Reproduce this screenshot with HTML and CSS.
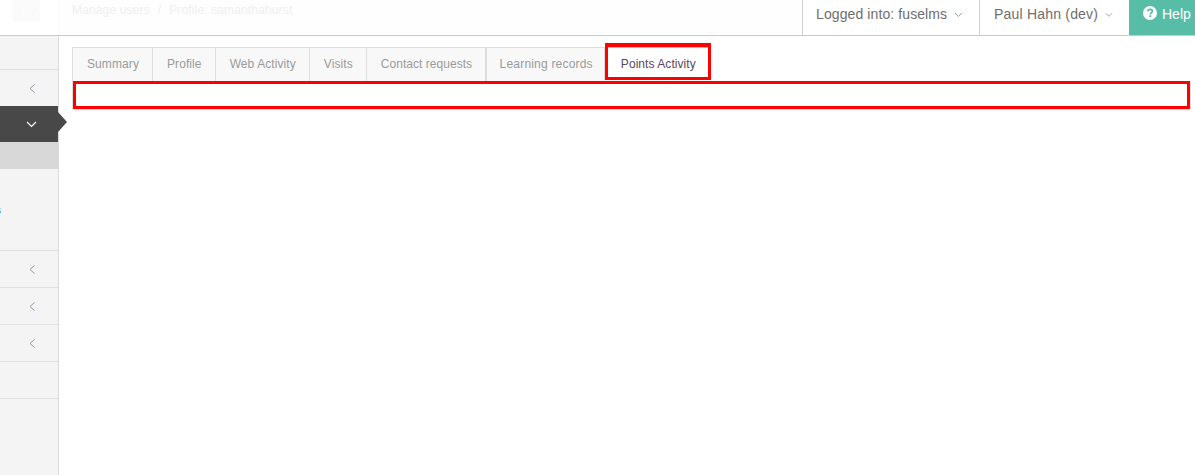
FILE: index.html
```html
<!DOCTYPE html>
<html lang="en">
<head>
<meta charset="utf-8">
<title>Profile: samanthahurst</title>
<link rel="stylesheet" href="styles.css">
</head>
<body>
<header class="topbar">
  <div class="nav-arrows">
    <svg class="faint-arrows" width="27" height="22" viewBox="0 0 27 22"><path d="M8 6 4 10l4 4M19 6l4 4-4 4" fill="none" stroke="#f6f6f6"/></svg>
  </div>
  <div class="crumbs"><span>Manage users</span><span class="slash">/</span><span>Profile: samanthahurst</span></div>
  <div class="top-item login">Logged into: fuselms<svg class="caret" width="9" height="6" viewBox="0 0 9 6"><path d="M1 1l3.500 3.500L8 1" fill="none" stroke="#999"/></svg></div>
  <div class="top-item user">Paul Hahn (dev)<svg class="caret" width="9" height="6" viewBox="0 0 9 6"><path d="M1 1l3.500 3.500L8 1" fill="none" stroke="#999"/></svg></div>
  <div class="help"><svg class="help-icon" width="14" height="14" viewBox="0 0 14 14"><circle cx="7" cy="7" r="7" fill="#fff"/><path d="M4.800 5.400C4.900 4 5.900 3.300 7.100 3.300c1.300 0 2.200.8 2.200 1.900 0 1.700-2 1.600-2 3.200" fill="none" stroke="#58bda6" stroke-width="1.700"/><rect x="6.300" y="9.300" width="2" height="1.800" fill="#58bda6"/></svg>Help</div>
</header>
<div class="main">
  <aside class="sidebar">
    <div class="side-row first"></div>
    <div class="side-row plain"><svg class="chev" width="6" height="9" viewBox="0 0 6 9"><path d="M5.500 .5l-4.500 4 4.500 4" fill="none" stroke="#8a97a8"/></svg></div>
    <div class="side-row active"><svg width="11" height="7" viewBox="0 0 11 7"><path d="M1 1l4.500 4.500L10 1" fill="none" stroke="#fff" stroke-width="1.200"/></svg><span class="pointer"></span></div>
    <div class="side-sub"></div>
    <div class="side-list"><span class="speck">s</span></div>
    <div class="side-row"><svg class="chev" width="6" height="9" viewBox="0 0 6 9"><path d="M5.500 .5l-4.500 4 4.500 4" fill="none" stroke="#8a97a8"/></svg></div>
    <div class="side-row"><svg class="chev" width="6" height="9" viewBox="0 0 6 9"><path d="M5.500 .5l-4.500 4 4.500 4" fill="none" stroke="#8a97a8"/></svg></div>
    <div class="side-row"><svg class="chev" width="6" height="9" viewBox="0 0 6 9"><path d="M5.500 .5l-4.500 4 4.500 4" fill="none" stroke="#8a97a8"/></svg></div>
    <div class="side-row"></div>
  </aside>
  <main class="content">
    <nav class="tabs">
      <a class="tab">Summary</a>
      <a class="tab">Profile</a>
      <a class="tab">Web Activity</a>
      <a class="tab">Visits</a>
      <a class="tab contact">Contact requests</a>
      <a class="tab wide">Learning records</a>
      <a class="tab current">Points Activity</a>
    </nav>
    <div class="panel"><div class="panel-mark"></div></div>
  </main>
</div>
</body>
</html>
```
FILE: styles.css
```css
* { box-sizing: border-box; }
html, body { margin: 0; height: 100%; overflow: hidden; background: #fff; }
body { font-family: "Liberation Sans", Arial, sans-serif; width: 1195px; height: 475px; }

.topbar { display: flex; align-items: stretch; height: 36px; border-bottom: 1px solid #c9c9c9; background: #fff; }
.nav-arrows { margin-left: 13px; width: 27px; height: 22px; background: #fbfbfb; }
.faint-arrows { display: block; }
.crumbs { flex: 1; margin: 0 0 2px 18px; padding: 3px 0 0 13px; border-left: 1px solid #fbfbfb; border-bottom: 1px solid #fafafa; background: #fefefe; font-size: 12px; line-height: 14px; letter-spacing: .14px; color: #efefef; white-space: nowrap; }
.slash { margin: 0 8px; }
.top-item { display: flex; align-items: center; padding: 0 16px 7px 13px; border-left: 1px solid #cfcfcf; font-size: 14px; letter-spacing: .1px; color: #6e6e6e; white-space: nowrap; }
.login { width: 177px; }
.user { width: 150px; padding-left: 14px; letter-spacing: .2px; }
.caret { margin-left: 7px; margin-top: 1px; }
.help { width: 66px; display: flex; align-items: center; padding: 0 0 7px 14px; background: #58bda6; color: #fff; font-size: 14px; white-space: nowrap; }
.help-icon { margin-right: 5px; margin-top: -2px; }

.main { display: flex; height: 439px; }
.sidebar { width: 59px; flex: none; background: #f4f4f4; border-right: 1px solid #dcdcdc; display: flex; flex-direction: column; }
.side-row { position: relative; height: 37px; display: flex; align-items: center; justify-content: flex-end; padding-right: 23px; border-bottom: 1px solid #e0e0e0; }
.side-row.first { height: 34px; }
.side-row.plain { height: 36px; border-bottom: 0; }
.side-row.active { height: 36px; background: #484848; border-bottom: 0; padding-right: 21px; }
.side-sub { height: 27px; margin-right: -1px; background: #d8d8d8; }
.side-list { position: relative; height: 82px; border-bottom: 1px solid #e0e0e0; display: flex; align-items: center; justify-content: flex-start; }
.speck { width: 1px; overflow: hidden; color: #2f7fd8; font-size: 13px; line-height: 14px; direction: rtl; }
.pointer { position: absolute; left: 58px; top: 6px; border-style: solid; border-width: 10px 0 10px 9px; border-color: transparent transparent transparent #484848; }

.content { flex: 1; padding: 11px 4px 0 13px; }
.tabs { display: flex; height: 34px; }
.tab { display: flex; align-items: center; padding: 0 13px 2px 14px; background: #f8f8f8; border: 1px solid #dedede; border-left-width: 0; border-bottom: 0; font-size: 12px; letter-spacing: .09px; color: #9a9a9a; white-space: nowrap; }
.tab:first-child { border-left-width: 1px; }
.tab.contact { letter-spacing: .03px; padding-right: 12.500px; }
.tab.wide { border-left-width: 1px; padding-left: 13px; padding-right: 11px; letter-spacing: .2px; }
.tab.current { padding: 4px 12px 0 13px; margin-top: -4px; height: 37px; background: #fff; color: #5d4560; border: 3px solid #f00; border-top-width: 4px; box-shadow: inset 0 1px 0 #e4b4b4; letter-spacing: .06px; }
.panel { height: 29px; border: 1px solid #dedede; border-top: 0; }
.panel-mark { height: 28px; border: 3px solid #f00; background: #fff; }
```
